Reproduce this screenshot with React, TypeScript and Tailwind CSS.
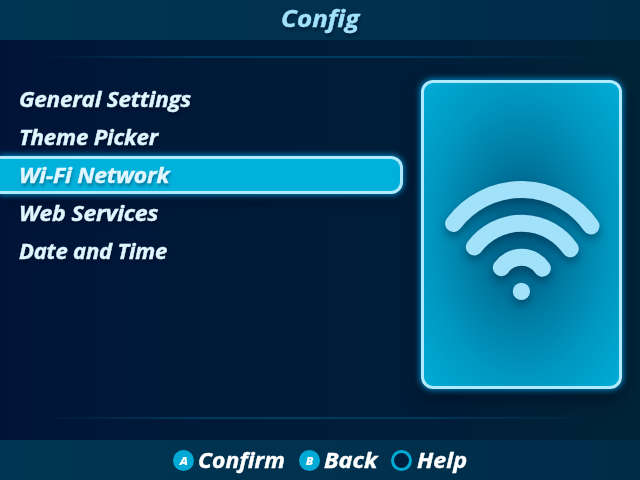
import React from "react";

const items = [
  { label: "General Settings", stretch: "scale-x-[1.07]" },
  { label: "Theme Picker", stretch: "scale-x-[1.06]" },
  { label: "Wi-Fi Network", stretch: "scale-x-[1.09]", selected: true },
  { label: "Web Services", stretch: "scale-x-[1.1]" },
  { label: "Date and Time", stretch: "scale-x-[1.05]" },
];

function WifiIcon() {
  return (
    <svg
      width="170"
      height="136"
      viewBox="436 173 170 136"
      fill="none"
      stroke="#a2e1fa"
      strokeWidth="17"
      strokeLinecap="round"
      className="overflow-visible drop-shadow-[0_5px_4px_rgba(0,25,50,0.4)]"
    >
      <path d="M453.6 223.5A84.7 84.7 0 0 1 591 226" />
      <path d="M474.3 247A59 59 0 0 1 570.3 248.8" />
      <path d="M501.3 267.7A25 25 0 0 1 542.3 268.3" />
      <circle cx="521.4" cy="291.4" r="8.6" fill="#a2e1fa" stroke="none" />
    </svg>
  );
}

function Rule() {
  return <div className="mx-10 h-[2px] shrink-0 bg-[linear-gradient(90deg,transparent,#003b60_30%,#003b60_65%,transparent)]" />;
}

function Button({ letter }: { letter: string }) {
  return (
    <span className="flex size-[21px] shrink-0 items-center justify-center rounded-full bg-[#00aad5] text-[11px] leading-none font-extrabold">
      <span className="scale-x-[1.1]">{letter}</span>
    </span>
  );
}

export default function App() {
  return (
    <div className="flex h-[480px] w-[640px] flex-col overflow-hidden bg-[linear-gradient(90deg,#001438_0%,#001739_15%,#001b38_40%,#001e39_70%,#002437_100%)] font-['Open_Sans','Noto_Sans',sans-serif] font-bold italic">
      <header className="flex h-10 shrink-0 justify-center bg-[linear-gradient(90deg,#003653,#00314e_50%,#002c48)] text-[24px] leading-[35px] text-[#a2e1fa] [text-shadow:1px_3px_3px_rgba(0,10,30,0.4)] [-webkit-text-stroke:0.4px_#a2e1fa]">
        <h1 className="scale-x-[1.08]">Config</h1>
      </header>
      <main className="flex h-[400px] shrink-0 flex-col pt-4">
        <Rule />
        <div className="flex h-[359px] shrink-0 justify-between">
          <ul className="mt-[23px] w-[403px] text-[21px] tracking-[-0.2px] text-[#e0f6ff] [text-shadow:1px_3px_3px_rgba(0,10,30,0.35)] [-webkit-text-stroke:0.4px_#e0f6ff]">
            {items.map((item) => (
              <li
                key={item.label}
                className={
                  item.selected
                    ? "-mt-px mb-px flex h-[38px] items-center rounded-r-[12px] border-y-[3px] border-r-[3px] border-[#b0eaff] bg-[#00b1dc] pt-[2px] pl-[19px] shadow-[0_0_6px_1px_#008cc8,0_6px_12px_rgba(0,8,25,0.55)]"
                    : "flex h-[38px] items-center pl-[19px]"
                }
              >
                <span className={"origin-left " + item.stretch}>{item.label}</span>
              </li>
            ))}
          </ul>
          <section className="mt-[22px] mr-[18px] flex h-[309px] w-[201px] items-center justify-center rounded-[12px] border-[3px] border-[#b0eaff] bg-[radial-gradient(ellipse_farthest-corner_at_center,#006088_0%,#00668d_18%,#0080a8_42%,#0098c1_68%,#00acd7_100%)] shadow-[0_0_6px_1px_#008cc8,0_8px_20px_rgba(0,8,25,0.65)]">
            <div className="mt-[13px] mr-[2px]">
              <WifiIcon />
            </div>
          </section>
        </div>
        <Rule />
      </main>
      <footer className="flex h-10 shrink-0 items-center bg-[linear-gradient(90deg,#003653,#00314e_50%,#002c48)] pl-[173px] text-[22px] text-white">
        <Button letter="A" />
        <span className="-mt-[2px] w-[105px] pl-1 [-webkit-text-stroke:0.4px_white]">
          <span className="inline-block origin-left scale-x-[1.04]">Confirm</span>
        </span>
        <Button letter="B" />
        <span className="-mt-[2px] w-[71px] pl-1 [-webkit-text-stroke:0.4px_white]">
          <span className="inline-block origin-left scale-x-[1.07]">Back</span>
        </span>
        <span className="size-[21px] rounded-full border-[3px] border-[#00aad5] bg-[#001e3d]" />
        <span className="-mt-[2px] pl-[5px] [-webkit-text-stroke:0.4px_white]">
          <span className="inline-block origin-left scale-x-[1.06]">Help</span>
        </span>
      </footer>
    </div>
  );
}
